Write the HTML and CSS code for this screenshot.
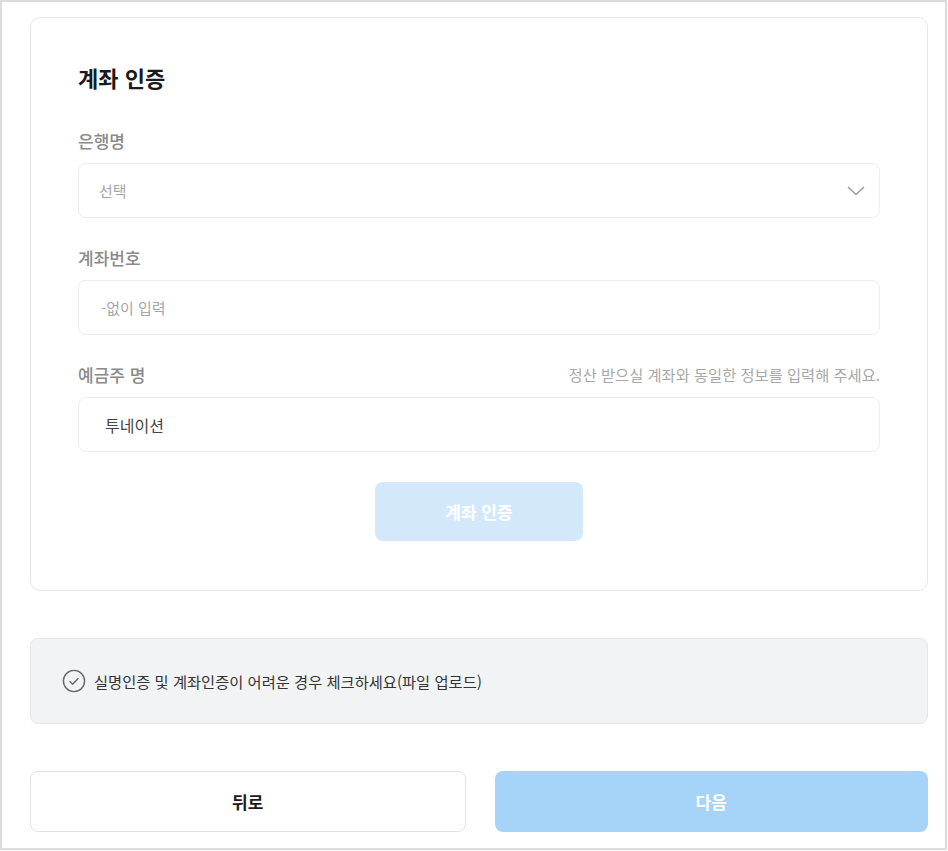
FILE: index.html
```html
<!DOCTYPE html>
<html lang="ko">
<head>
<meta charset="utf-8">
<link rel="stylesheet" href="styles.css">
</head>
<body>
<div class="frame">
  <section class="card">
    <h2 class="title">계좌 인증</h2>
    <div class="field">
      <div class="label-row"><span class="label">은행명</span></div>
      <div class="box select">
        <span class="placeholder">선택</span>
        <svg class="chev" width="18" height="10" viewBox="0 0 18 10"><path d="M1 1 L9 8.5 L17 1" fill="none" stroke="#9a9a9a" stroke-width="1.4"/></svg>
      </div>
    </div>
    <div class="field">
      <div class="label-row"><span class="label">계좌번호</span></div>
      <div class="box"><span class="placeholder ph2">-없이 입력</span></div>
    </div>
    <div class="field last">
      <div class="label-row"><span class="label">예금주 명</span><span class="hint">정산 받으실 계좌와 동일한 정보를 입력해 주세요.</span></div>
      <div class="box"><span class="value">투네이션</span></div>
    </div>
    <div class="verify-row"><button class="verify">계좌 인증</button></div>
  </section>
  <div class="notice">
    <svg class="check" width="24" height="24" viewBox="0 0 24 24"><circle cx="12" cy="12" r="10.6" fill="none" stroke="#666" stroke-width="1.4"/><path d="M7.6 12.3 L10.6 15.2 L16.4 9.2" fill="none" stroke="#666" stroke-width="1.4"/></svg>
    <span class="notice-text">실명인증 및 계좌인증이 어려운 경우 체크하세요(파일 업로드)</span>
  </div>
  <div class="actions">
    <button class="btn back">뒤로</button>
    <button class="btn next">다음</button>
  </div>
</div>
</body>
</html>
```
FILE: styles.css
```css
* { box-sizing: border-box; }
html, body { margin: 0; padding: 0; background: #fff; }
body { font-family: "Noto Sans CJK KR", "Noto Sans", sans-serif; }
.frame {
  width: 947px;
  height: 850px;
  border: 2px solid #dcdcdc;
  padding: 15px 17px 0 28px;
}
.card {
  border: 1px solid #e6e6e6;
  border-radius: 10px;
  padding: 44px 47px 0 47px;
  height: 574px;
}
.title {
  margin: 0 0 36px 0;
  font-size: 22px;
  font-weight: 700;
  color: #1a1a1a;
  line-height: 30px;
}
.field { margin-bottom: 27px; }
.field.last { margin-bottom: 0; }
.label-row {
  display: flex;
  justify-content: space-between;
  align-items: center;
  height: 24px;
  margin-bottom: 11px;
}
.label { font-size: 17px; font-weight: 500; color: #8a8a8a; }
.hint { font-size: 15.3px; color: #a8a8a8; }
.box {
  height: 55px;
  border: 1px solid #ededed;
  border-radius: 8px;
  display: flex;
  align-items: center;
  padding: 0 20px;
}
.select { justify-content: space-between; padding-right: 14px; }
.placeholder { font-size: 15px; color: #a5a5a5; }
.ph2 { padding-left: 2px; }
.value { font-size: 16px; color: #444; padding-left: 6px; }
.verify-row { display: flex; justify-content: center; margin-top: 30px; }
.verify {
  width: 208px;
  height: 59px;
  border: none;
  border-radius: 8px;
  background: #d3e9fb;
  color: #fff;
  font-family: inherit;
  font-size: 17px;
  font-weight: 700;
}
.notice {
  margin-top: 47px;
  height: 86px;
  background: #f2f3f5;
  border: 1px solid #e6e7ea;
  border-radius: 8px;
  display: flex;
  align-items: center;
  padding-left: 31px;
  gap: 8px;
}
.check { flex: none; }
.notice-text { font-size: 15.3px; color: #333; }
.actions {
  margin-top: 47px;
  display: flex;
  gap: 29px;
}
.btn {
  flex: 1;
  height: 61px;
  border-radius: 8px;
  font-family: inherit;
  font-size: 17px;
  font-weight: 700;
}
.back { background: #fff; border: 1px solid #e3e3e3; color: #1a1a1a; }
.next { background: #a6d4f8; border: none; color: #fff; }
```
